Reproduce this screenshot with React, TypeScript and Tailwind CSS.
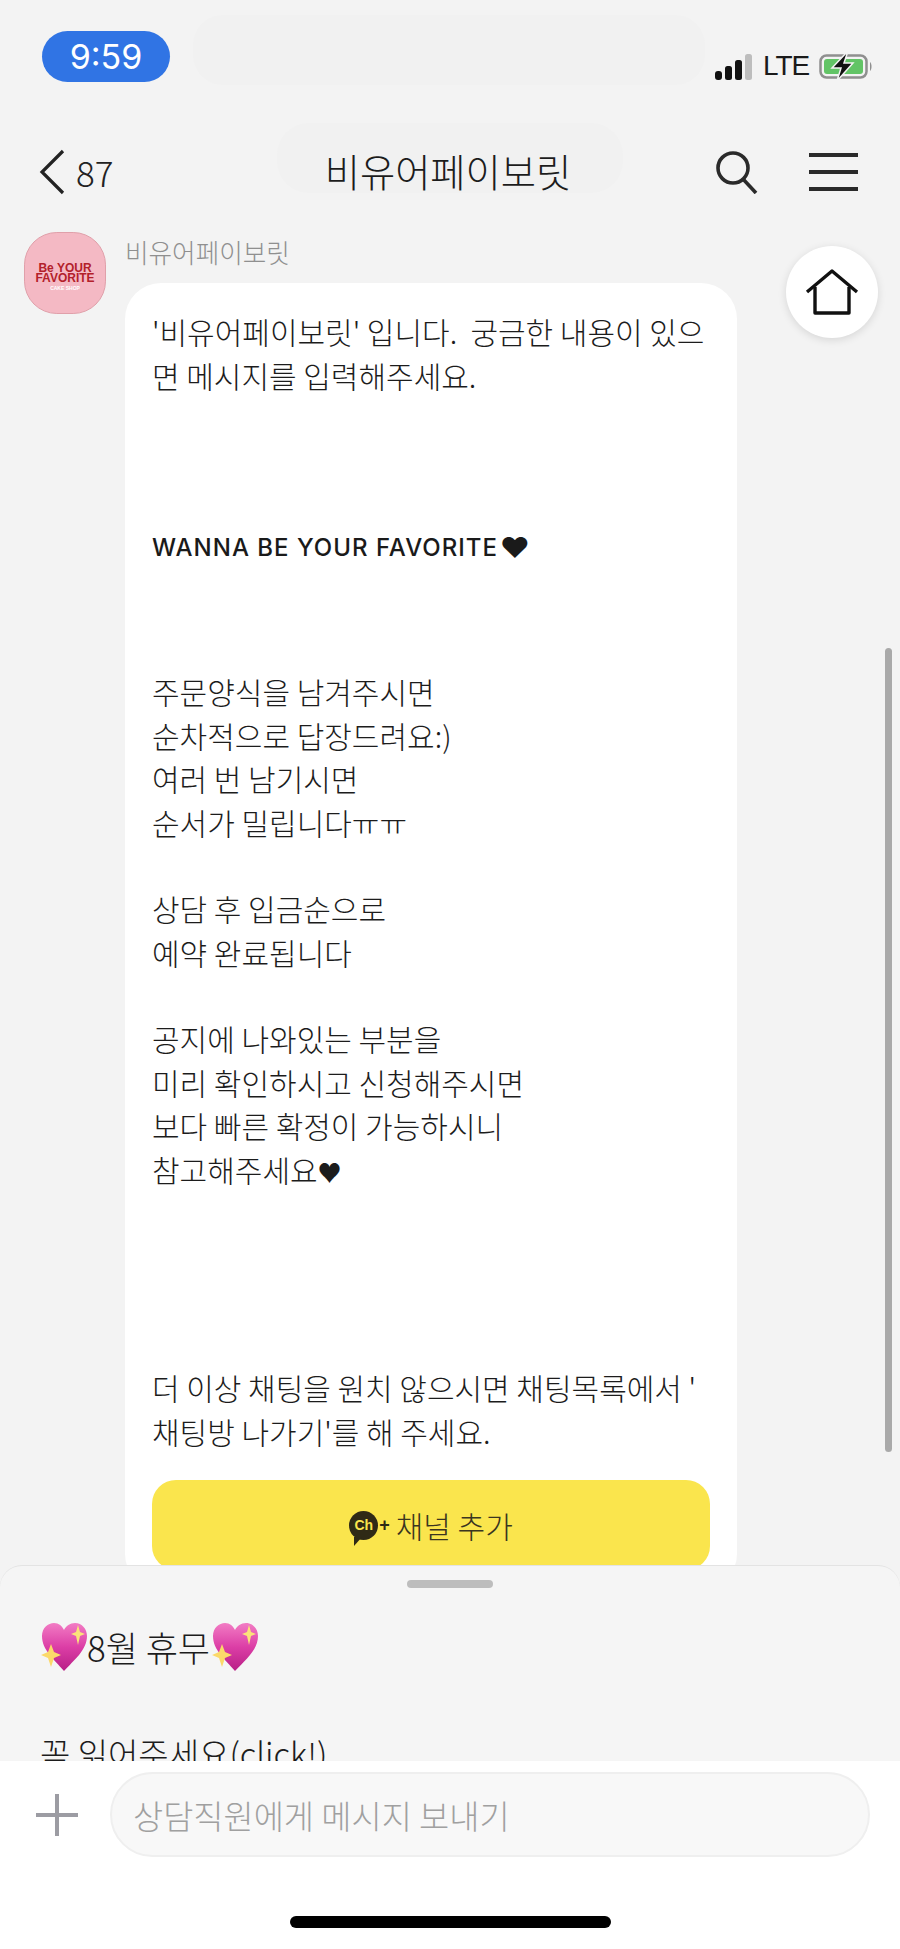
import type { ReactNode } from 'react'

const FONT = "font-['Noto_Sans_CJK_KR',sans-serif]"

function Heart() {
  return (
    <svg width="48" height="52" viewBox="0 0 48 50" className="shrink-0">
      <defs>
        <linearGradient id="heartFill" x1="0" y1="0" x2="0" y2="1">
          <stop offset="0" stopColor="#f27cc4" />
          <stop offset="0.5" stopColor="#dc3ea6" />
          <stop offset="1" stopColor="#b81f86" />
        </linearGradient>
      </defs>
      <path d="M24 49C14 37 2 28 2 14 2 6 8 1 14 1c5 0 8 3 10 7 2-4 6-7 11-7 7 0 12 6 12 13 0 14-13 24-23 35z" fill="url(#heartFill)" />
      <path d="M38 3l2 7 5 2-5 2-2 9-2-9-5-2 5-2z" fill="#fbe27a" />
      <path d="M11 22l3 8 7 3-7 3-3 9-3-9-7-3 7-3z" fill="#fbd96a" />
    </svg>
  )
}

function StatusBar() {
  return (
    <div className="flex h-[100px] shrink-0 items-start pl-[42px] pr-[8px]">
      <div className="mt-[31px] flex h-[51px] w-[128px] items-center justify-center rounded-[26px] bg-[#3074e4] font-['Inter',sans-serif] text-[34px] text-white">
        9:59
      </div>
      <div className="ml-[23px] mt-[15px] h-[70px] w-[512px] rounded-[30px] bg-[#f1f1f1]" />
      <div className="ml-[8px] mt-[51px] flex items-center gap-[10px]">
        <svg width="40" height="27" viewBox="0 0 40 27">
          <rect x="2" y="18" width="7" height="9" rx="3" fill="#111" />
          <rect x="12" y="13" width="7" height="14" rx="2.5" fill="#111" />
          <rect x="22" y="7" width="7" height="20" rx="2.5" fill="#111" />
          <rect x="32" y="1" width="7" height="26" rx="2.5" fill="#bdbdbd" />
        </svg>
        <span className="font-['Liberation_Sans',sans-serif] text-[28px] leading-none tracking-[-1px] text-[#1a1a1a]">LTE</span>
        <svg width="56" height="30" viewBox="0 0 56 30">
          <rect x="1.5" y="4.5" width="46" height="22" rx="6" fill="none" stroke="#8f8f8f" strokeWidth="2.5" />
          <rect x="5" y="8" width="39" height="15" rx="3" fill="#62c466" />
          <path d="M51 11c2 1 2 8 0 9z" fill="#8f8f8f" />
          <path d="M29 0L13 17h9l-4 13 16-18h-9z" fill="#111" stroke="#f3f3f3" strokeWidth="1.5" />
        </svg>
      </div>
    </div>
  )
}

function NavBar() {
  return (
    <div className="relative grid h-[121px] shrink-0 grid-cols-[1fr_auto_1fr] items-center pl-[38px] pr-[42px] pt-[22px]">
      {/* ghost pill left behind the title */}
      <div className="absolute left-[277px] top-[23px] h-[70px] w-[346px] rounded-[32px] bg-[#f1f1f1]" />
      <div className="flex items-center">
        <svg width="28" height="46" viewBox="0 0 28 46" fill="none" stroke="#222" strokeWidth="3.2">
          <path d="M25 2L4 23l21 21" />
        </svg>
        <span className={`ml-[10px] text-[35px] font-light leading-none text-[#222] ${FONT}`}>87</span>
      </div>
      <span className={`relative text-[38.3px] font-light leading-none text-[#1c1c1c] ${FONT}`}>비유어페이보릿</span>
      <div className="flex items-center justify-end">
        <svg width="44" height="44" viewBox="0 0 44 44" fill="none" stroke="#2a2a2a" strokeWidth="3.6" className="mr-[50px]">
          <circle cx="18" cy="18" r="15" />
          <path d="M28 29l13 14" />
        </svg>
        <div className="flex w-[49px] flex-col gap-[13px]">
          <div className="h-[4px] bg-[#2a2a2a]" />
          <div className="h-[4px] bg-[#2a2a2a]" />
          <div className="h-[4px] bg-[#2a2a2a]" />
        </div>
      </div>
    </div>
  )
}

function Lines({ lines, className = '' }: { lines: ReactNode[]; className?: string }) {
  return (
    <div className={className}>
      {lines.map((line, index) => (
        <p key={index} className="whitespace-pre leading-[43.5px]">
          {line}
        </p>
      ))}
    </div>
  )
}

function Bubble() {
  return (
    <div className={`mt-[11px] w-[612px] rounded-[36px] bg-white px-[27px] pb-[20px] pt-[27px] text-[30px] font-light text-[#1c1c1c] ${FONT}`}>
      <Lines lines={["'비유어페이보릿' 입니다.  궁금한 내용이 있으", '면 메시지를 입력해주세요.']} />
      <p className="mt-[129px] flex items-center font-['Inter',sans-serif] text-[24px] font-medium leading-[43px] tracking-[1px] text-[#1a1a1a]">
        WANNA BE YOUR FAVORITE<span className="ml-[2px] text-[29px] leading-none">♥</span>
      </p>
      <Lines className="mt-[101px]" lines={['주문양식을 남겨주시면', '순차적으로 답장드려요:)', '여러 번 남기시면', '순서가 밀립니다ㅠㅠ']} />
      <Lines className="mt-[43px]" lines={['상담 후 입금순으로', '예약 완료됩니다']} />
      <Lines
        className="mt-[43px]"
        lines={[
          '공지에 나와있는 부분을',
          '미리 확인하시고 신청해주시면',
          '보다 빠른 확정이 가능하시니',
          <>
            참고해주세요<span className="text-[24px]">♥</span>
          </>,
        ]}
      />
      <Lines className="mt-[173px]" lines={["더 이상 채팅을 원치 않으시면 채팅목록에서 '", "채팅방 나가기'를 해 주세요."]} />
      <div className="mt-[27px] flex h-[90px] items-center justify-center gap-[6px] rounded-[24px] bg-[#fae54d] text-[#3a3520]">
        <span className="flex items-center">
          <span className="relative flex h-[29px] w-[29px] items-center justify-center rounded-full bg-[#2f2a16] font-['Liberation_Sans',sans-serif] text-[14px] font-bold leading-none text-[#fae54d]">
            Ch
            <span className="absolute bottom-[-6px] left-[5px] h-0 w-0 border-r-[8px] border-t-[9px] border-r-transparent border-t-[#2f2a16]" />
          </span>
          <span className="ml-[1px] font-['Liberation_Sans',sans-serif] text-[18px] font-bold leading-none text-[#2f2a16]">+</span>
        </span>
        <span>채널 추가</span>
      </div>
    </div>
  )
}

function Chat() {
  return (
    <div className="relative min-h-0 flex-1 overflow-hidden">
      <div className="flex items-start gap-[19px] pl-[24px] pt-[11px]">
        <div className="flex h-[82px] w-[82px] shrink-0 flex-col items-center justify-center rounded-[40%] border border-[#e0a0aa] bg-[#f4b9c4] pt-[8px]">
          <span className="font-['Liberation_Sans',sans-serif] text-[12px] font-black leading-[10px] text-[#b3202a]">Be YOUR</span>
          <span className="font-['Liberation_Sans',sans-serif] text-[12px] font-black leading-[10px] text-[#b3202a]">FAVORITE</span>
          <span className="mt-[3px] font-['Liberation_Sans',sans-serif] text-[5px] font-bold leading-none text-white">CAKE SHOP</span>
        </div>
        <div>
          <p className={`text-[25.6px] font-light leading-[40px] text-[#8f8f8f] ${FONT}`}>비유어페이보릿</p>
          <Bubble />
        </div>
      </div>

      <div className="absolute right-[22px] top-[25px] flex h-[92px] w-[92px] items-center justify-center rounded-full bg-white shadow-[0_2px_8px_rgba(0,0,0,0.12)]">
        <svg width="54" height="46" viewBox="0 0 54 46" fill="none" stroke="#111" strokeWidth="3.4" strokeLinejoin="round">
          <path d="M2 23L27 2l25 21" />
          <path d="M10 18v26h34V18" />
        </svg>
      </div>

      <div className="absolute right-[8px] top-[427px] h-[804px] w-[7px] rounded-full bg-[#a9a9a9]" />

      <div className="absolute inset-x-0 bottom-0 h-[196px] overflow-hidden rounded-t-[22px] border-t border-[#e3e3e3] bg-[#f5f5f5]">
        <div className="mx-auto mt-[14px] h-[8px] w-[86px] rounded-full bg-[#bdbdbd]" />
        <div className={`mt-[33px] flex items-center pl-[40px] text-[35px] font-light leading-[50px] text-[#1c1c1c] ${FONT}`}>
          <Heart />
          <span className="-ml-[1px] mr-[1px]">8월 휴무</span>
          <Heart />
        </div>
        <p className={`mt-[55px] pl-[40px] text-[33px] font-light leading-[50px] text-[#1c1c1c] ${FONT}`}>꼭 읽어주세요(click!)</p>
      </div>
    </div>
  )
}

function InputBar() {
  return (
    <div className="flex h-[188px] shrink-0 flex-col bg-white">
      <div className="mt-[11px] flex items-center pl-[36px] pr-[30px]">
        <svg width="42" height="42" viewBox="0 0 42 42" fill="none" stroke="#9c9ca3" strokeWidth="4" className="shrink-0">
          <path d="M21 0v42M0 21h42" />
        </svg>
        <div className={`ml-[32px] flex h-[85px] flex-1 items-center rounded-[43px] border-2 border-[#efefef] bg-[#f8f8f8] pl-[21px] text-[32.8px] font-light text-[#a0a0a0] ${FONT}`}>
          상담직원에게 메시지 보내기
        </div>
      </div>
      <div className="mx-auto mt-[59px] h-[12px] w-[321px] rounded-full bg-black" />
    </div>
  )
}

export default function App() {
  return (
    <div className="flex h-[1949px] w-[900px] flex-col overflow-hidden bg-[#f3f3f3]">
      <StatusBar />
      <NavBar />
      <Chat />
      <InputBar />
    </div>
  )
}
